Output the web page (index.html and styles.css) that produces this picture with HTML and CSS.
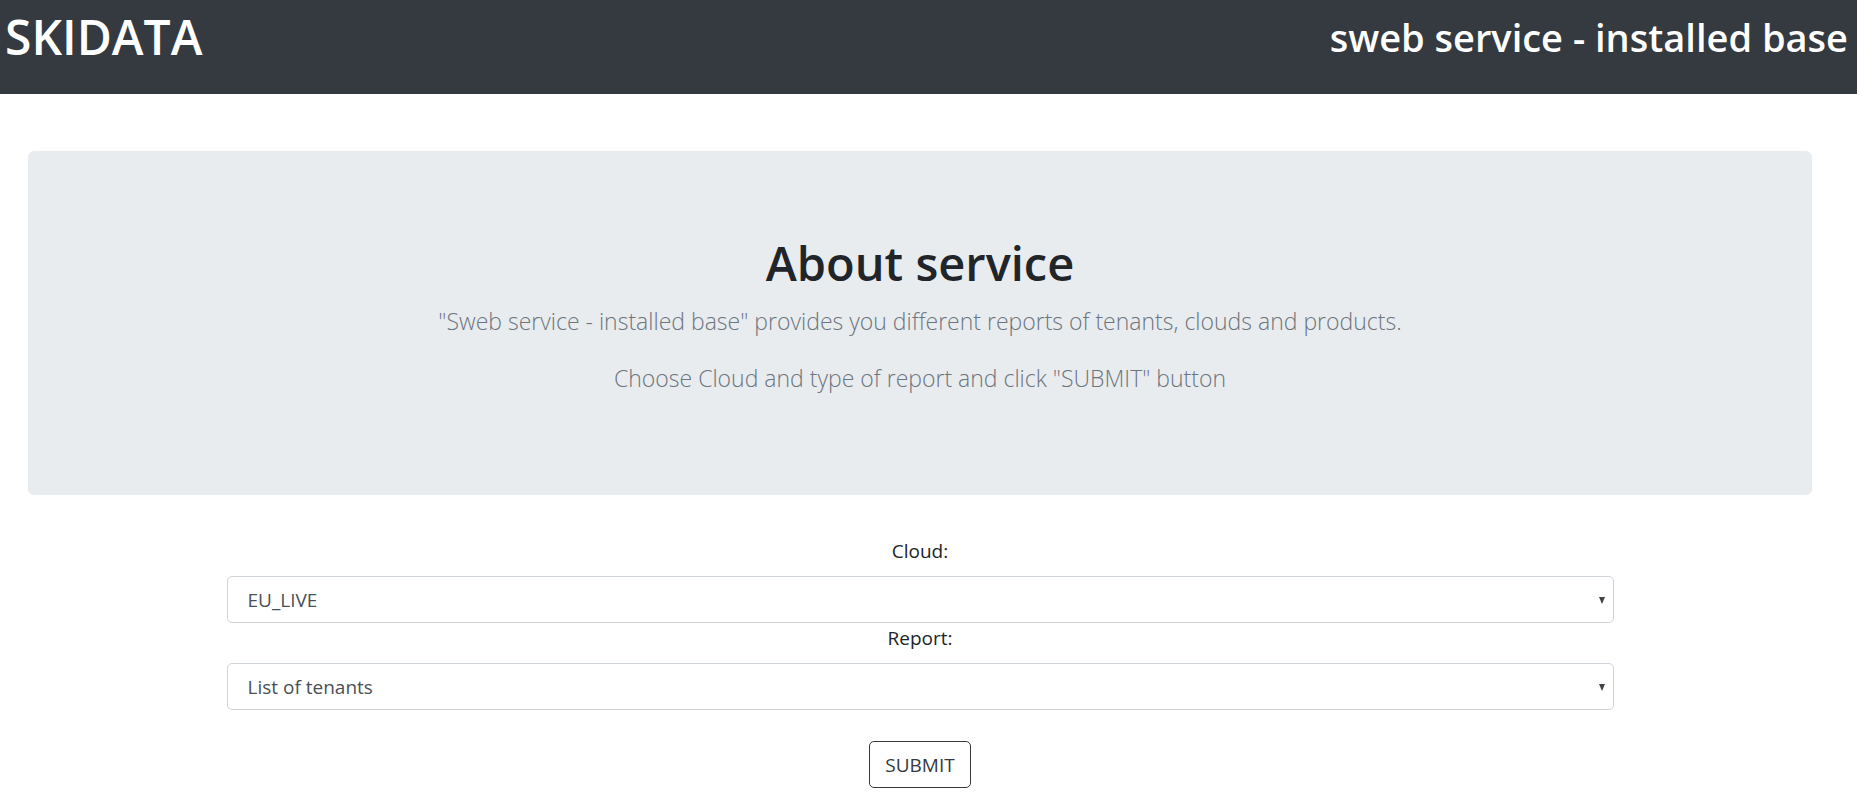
FILE: index.html
```html
<!DOCTYPE html>
<html lang="en">
<head>
<meta charset="utf-8">
<title>sweb service - installed base</title>
<link rel="stylesheet" href="styles.css">
</head>
<body>
<header class="topbar">
  <h1 class="brand">SKIDATA</h1>
  <h2 class="app-title">sweb service - installed base</h2>
</header>
<main class="page">
  <section class="jumbotron">
    <h1 class="jumbo-title">About service</h1>
    <p class="lead">"Sweb service - installed base" provides you different reports of tenants, clouds and products.</p>
    <p class="lead">Choose Cloud and type of report and click "SUBMIT" button</p>
  </section>
  <form class="report-form">
    <label class="field-label" for="cloud">Cloud:</label>
    <div class="select-wrap">
      <select id="cloud" class="custom-select">
        <option>EU_LIVE</option>
      </select>
    </div>
    <label class="field-label" for="report">Report:</label>
    <div class="select-wrap">
      <select id="report" class="custom-select">
        <option>List of tenants</option>
      </select>
    </div>
    <div class="actions">
      <button type="button" class="btn-outline">SUBMIT</button>
    </div>
  </form>
</main>
</body>
</html>
```
FILE: styles.css
```css
* { box-sizing: border-box; }

html, body {
  margin: 0;
  padding: 0;
  background: #ffffff;
}

body {
  font-family: "Open Sans", "Noto Sans", "DejaVu Sans", sans-serif;
  font-size: 19px;
  color: #212529;
}

.topbar {
  display: flex;
  justify-content: space-between;
  align-items: flex-start;
  height: 94px;
  margin-right: 3px;
  padding: 7px 9px 0 5px;
  background: #343a40;
  color: #ffffff;
}

.brand {
  margin: 0;
  font-size: 48px;
  font-weight: 600;
  line-height: 60px;
}

.app-title {
  margin: 6px 0 0;
  font-size: 38px;
  font-weight: 600;
  line-height: 48px;
}

.page {
  padding: 57px 48px 0 28px;
}

.jumbotron {
  background: #e9ecef;
  border-radius: 6px;
  padding: 82px 40px 98px;
  margin-bottom: 41px;
  text-align: center;
}

.jumbo-title {
  margin: 0 0 10px;
  font-size: 47px;
  font-weight: 600;
  line-height: 60px;
  color: #212529;
}

.lead {
  margin: 0 0 19px;
  font-size: 23px;
  font-weight: 300;
  line-height: 37.5px;
  color: #6c757d;
}

.lead:last-child {
  margin-bottom: 0;
}

.report-form {
  width: 1387px;
  margin: 0 auto;
}

.field-label {
  display: block;
  text-align: center;
  line-height: 30px;
  margin-bottom: 10px;
  color: #212529;
}

.select-wrap {
  position: relative;
}

.select-wrap::after {
  content: "";
  position: absolute;
  right: 9px;
  top: 50%;
  margin-top: -3px;
  border-left: 3.5px solid transparent;
  border-right: 3.5px solid transparent;
  border-top: 7px solid #3f4449;
  pointer-events: none;
}

.custom-select {
  display: block;
  width: 100%;
  height: 47px;
  padding: 0 30px 0 20px;
  font-family: inherit;
  font-size: 19px;
  color: #495057;
  background: #ffffff;
  border: 1px solid #ced4da;
  border-radius: 5px;
  appearance: none;
  -webkit-appearance: none;
  outline: none;
}

.actions {
  display: flex;
  justify-content: center;
  margin-top: 31px;
}

.btn-outline {
  height: 47px;
  padding: 0 15px;
  font-family: inherit;
  font-size: 19px;
  color: #343a40;
  background: transparent;
  border: 1px solid #343a40;
  border-radius: 5px;
}
```
